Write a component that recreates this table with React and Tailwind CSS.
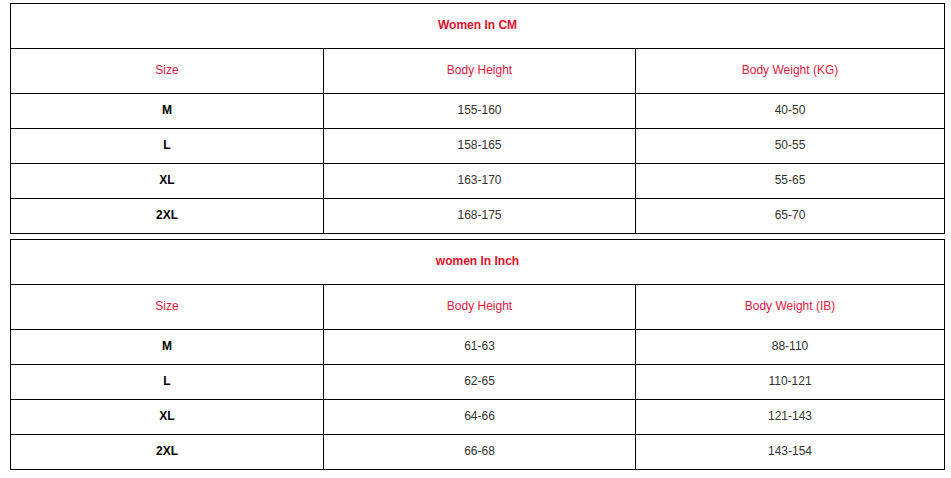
import React from "react";

const tables = [
  {
    title: "Women In CM",
    headers: ["Size", "Body Height", "Body Weight (KG)"],
    rows: [
      ["M", "155-160", "40-50"],
      ["L", "158-165", "50-55"],
      ["XL", "163-170", "55-65"],
      ["2XL", "168-175", "65-70"],
    ],
  },
  {
    title: "women In Inch",
    headers: ["Size", "Body Height", "Body Weight (IB)"],
    rows: [
      ["M", "61-63", "88-110"],
      ["L", "62-65", "110-121"],
      ["XL", "64-66", "121-143"],
      ["2XL", "66-68", "143-154"],
    ],
  },
];

const cell = "border border-black text-center p-0 pb-[2px]";

const SizeTable = ({ data, className }) => (
  <table className={`w-[934px] border-collapse table-fixed ${className}`}>
    <colgroup>
      <col className="w-[313px]" />
      <col className="w-[312px]" />
      <col className="w-[309px]" />
    </colgroup>
    <tbody>
      <tr className="h-[45px]">
        <td colSpan={3} className={`${cell} font-bold text-[#e0102c]`}>
          {data.title}
        </td>
      </tr>
      <tr className="h-[45px]">
        {data.headers.map((h) => (
          <td key={h} className={`${cell} text-[#e3193f]`}>
            {h}
          </td>
        ))}
      </tr>
      {data.rows.map((r) => (
        <tr key={r[0]} className="h-[35px]">
          <td className={`${cell} font-bold text-black`}>{r[0]}</td>
          <td className={`${cell} text-[#333]`}>{r[1]}</td>
          <td className={`${cell} text-[#333]`}>{r[2]}</td>
        </tr>
      ))}
    </tbody>
  </table>
);

export default function App() {
  return (
    <div className="w-[951px] h-[478px] bg-white pl-[10px] pt-[3px] text-[12px] font-['Liberation_Sans',Arial,sans-serif]">
      <SizeTable data={tables[0]} />
      <SizeTable data={tables[1]} className="mt-[5px]" />
    </div>
  );
}
